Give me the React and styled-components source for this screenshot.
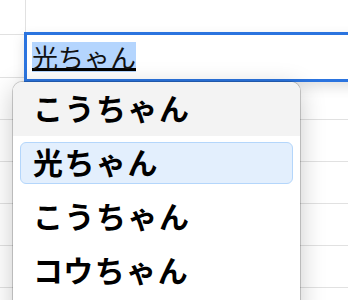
import React from 'react';
import { styled, createGlobalStyle } from 'styled-components';

const GlobalStyle = createGlobalStyle`
  html, body {
    margin: 0;
    padding: 0;
    background: #fff;
  }
  body {
    font-family: 'Noto Sans CJK JP', 'Noto Sans', sans-serif;
  }
`;

const rows = [34, 42, 41, 41, 41, 41, 41, 41];

const candidates = [
  { text: 'こうちゃん', state: 'hover' },
  { text: '光ちゃん', state: 'selected' },
  { text: 'こうちゃん' },
  { text: 'コウちゃん' },
];

const App = () => {
  return (
    <St.Sheet>
      <GlobalStyle />
      <St.Grid>
        {rows.map((h, i) => (
          <St.Row key={i} $h={h}>
            <St.HeadCell />
            <St.Cell />
          </St.Row>
        ))}
      </St.Grid>

      <St.EditBox>
        <St.Composing>光ちゃん</St.Composing>
      </St.EditBox>

      <St.Candidates>
        {candidates.map((c, i) => (
          <St.Slot key={i} $hover={c.state === 'hover'}>
            <St.Candidate $selected={c.state === 'selected'}>{c.text}</St.Candidate>
          </St.Slot>
        ))}
      </St.Candidates>
    </St.Sheet>
  );
};

export default App;

const St = {
  Sheet: styled.div`
    position: relative;
    width: 348px;
    height: 300px;
    overflow: hidden;
    background: #fff;
  `,

  Grid: styled.div`
    display: flex;
    flex-direction: column;
  `,

  Row: styled.div`
    display: flex;
    height: ${(p) => p.$h}px;
    border-bottom: 1px solid #e1e1e1;
  `,

  HeadCell: styled.div`
    width: 25px;
    border-right: 1px solid #e1e1e1;
  `,

  Cell: styled.div`
    flex: 1;
  `,

  EditBox: styled.div`
    position: absolute;
    left: 24px;
    top: 32px;
    right: -40px;
    height: 50px;
    box-sizing: border-box;
    border: 3px solid #2b74df;
    background: #fff;
    padding: 7px 5px;
    font-size: 26px;
    line-height: 30px;
    color: #111;
    box-shadow: 0 5px 12px rgba(0, 0, 0, 0.12);
    z-index: 1;
  `,

  Composing: styled.span`
    display: inline-block;
    height: 30px;
    background: linear-gradient(to top, #b4d5fe 1px, #000 1px, #000 4px, #b4d5fe 4px);
  `,

  Candidates: styled.div`
    position: absolute;
    left: 13px;
    top: 82px;
    width: 287px;
    height: 240px;
    background: #fff;
    border-radius: 9px;
    overflow: hidden;
    box-shadow: 0 0 0 1px rgba(0, 0, 0, 0.18), 0 6px 26px rgba(0, 0, 0, 0.22);
    z-index: 2;
  `,

  Slot: styled.div`
    height: 54px;
    display: flex;
    flex-direction: column;
    justify-content: center;
    background: ${(p) => (p.$hover ? '#f3f3f3' : '#fff')};
  `,

  Candidate: styled.div`
    display: flex;
    align-items: center;
    box-sizing: border-box;
    height: 42px;
    margin: 0 ${(p) => (p.$selected ? '7px' : '0')};
    padding-left: ${(p) => (p.$selected ? '12px' : '20px')};
    padding-bottom: 4px;
    border: ${(p) => (p.$selected ? '1.5px solid #b4d6fb' : 'none')};
    border-radius: 6px;
    background: ${(p) => (p.$selected ? '#e3effd' : 'transparent')};
    font-size: 30px;
    font-weight: 700;
    letter-spacing: 1.5px;
    color: #000;
    line-height: 1;
  `,
};
